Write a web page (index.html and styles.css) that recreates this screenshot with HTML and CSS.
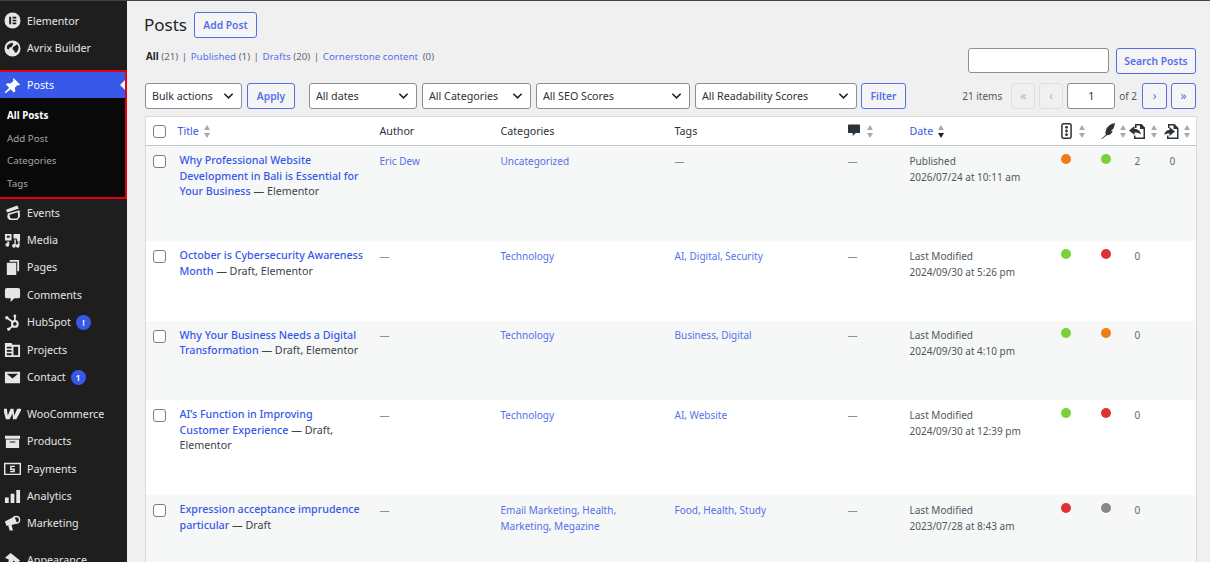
FILE: index.html
```html
<!DOCTYPE html>
<html lang="en">
<head>
<meta charset="utf-8">
<title>Posts</title>
<link rel="stylesheet" href="styles.css">
</head>
<body>
<div class="app">
<nav class="side">
  <ul class="menu first">
    <li><svg class="ic" viewBox="1 1 18 18"><path d="M10 1.500a8.500 8.500 0 1 0 0 17 8.500 8.500 0 0 0 0-17zM6.500 6h2v8h-2zm3.500 0h4v1.800h-4zm0 3.100h4v1.800h-4zm0 3.100h4V14h-4z" fill-rule="evenodd"/></svg>Elementor</li>
    <li><svg class="ic" viewBox="1 1 18 18"><path d="M10 1.500a8.500 8.500 0 1 0 0 17 8.500 8.500 0 0 0 0-17zM4.500 6.500 7 5l2-1 2 1-1 1.500-1 2-2 .5-1 2-2-1zm7.500 1 3-2 1.500 3-.5 3-2 3-2-.5v-2l-2-1 .5-2.500z" fill-rule="evenodd"/></svg>Avrix Builder</li>
  </ul>
  <div class="box">
    <div class="active"><svg class="ic" viewBox="1 1 18 18"><path d="m11 2 7 7-1.500 1-1-.5-3 3 .5 3.500-1.500 1.500-3.500-3.500L3 18l-1 0 0-1 4.500-4.500L3 9l1.500-1.500 3.500.5 3-3-.5-1z"/></svg>Posts<i class="notch"></i></div>
    <ul class="sub">
      <li class="cur">All Posts</li>
      <li>Add Post</li>
      <li>Categories</li>
      <li>Tags</li>
    </ul>
  </div>
  <ul class="menu">
    <li><svg class="ic" viewBox="1 1 18 18"><path d="M3 7 15 2.500l1.800 3.300L4.500 10zM5 11l12.500-3.500.5 7-3 3.500H7l-2.500-2.500zM6.800 12.300l.6 3 1 1h6l1.500-1.500-.3-5z" fill-rule="evenodd"/></svg>Events</li>
    <li><svg class="ic" viewBox="1 1 18 18"><path d="M2 3h7v7H2zM4 5v2h3V5zM11 3h7v8h-3V9l-1-1h-3zM12 9h1.500v6.500a2 2 0 1 1-1.500-1.800zM16 11.500h1.500v4a2 2 0 1 1-1.500-1.800zM4 11l2.500 0v3.500a2 2 0 1 1-1.500-1.800V12H4z" fill-rule="evenodd"/></svg>Media</li>
    <li><svg class="ic" viewBox="1 1 18 18"><path d="M7 2h10v12h-2V4H7zM4 5h10v13H4z"/></svg>Pages</li>
    <li><svg class="ic" viewBox="1 1 18 18"><path d="M4 3h12a2 2 0 0 1 2 2v7a2 2 0 0 1-2 2h-4l-4 4v-4H4a2 2 0 0 1-2-2V5a2 2 0 0 1 2-2z"/></svg>Comments</li>
    <li><svg class="ic" viewBox="1 1 18 18"><circle cx="12.500" cy="11.500" r="3" fill="none" stroke="currentColor" stroke-width="2.200"/><path d="M12.500 3v6M4 5l7 5M10 14l-4 3" fill="none" stroke="currentColor" stroke-width="1.800"/><circle cx="4" cy="5" r="1.800"/><circle cx="6" cy="17" r="1.800"/><circle cx="12.500" cy="3" r="1.500"/></svg>HubSpot<b class="badge">!</b></li>
    <li><svg class="ic" viewBox="1 1 18 18"><path d="M2 3h7l1 2h8v13H2zM4 7v2h5V7zm0 3.500v2h5v-2zm0 3.500v2h5v-2zM11 7v9h5V7z" fill-rule="evenodd"/></svg>Projects</li>
    <li><svg class="ic" viewBox="1 1 18 18"><path d="M2 4h16v12H2zM4 6l6 5 6-5z" fill-rule="evenodd"/></svg>Contact<b class="badge">1</b></li>
  </ul>
  <ul class="menu group">
    <li><svg class="ic" viewBox="1 1 18 18"><path d="M0 5h4l1 7 3-7h3l1 7 3-7h5l-6 11h-3.500L10 10l-3 6H3z"/></svg>WooCommerce</li>
    <li><svg class="ic" viewBox="1 1 18 18"><path d="M2 4h16v3H2zM3 8h14v9H3zM7 10v1h6v-1z" fill-rule="evenodd"/></svg>Products</li>
    <li><svg class="ic" viewBox="1 1 18 18"><path d="M1 4h18v13H1zM2.500 5.500v10h15v-10z" fill-rule="evenodd"/><path d="M7.500 7h5v1.500H9v1.500h3.500v4h-5v-1.500H11V11.500H7.500z"/></svg>Payments</li>
    <li><svg class="ic" viewBox="1 1 18 18"><path d="M2 11h4v6H2zM8 7h4v10H8zM14 3h4v14h-4z"/></svg>Analytics</li>
    <li><svg class="ic" viewBox="1 1 18 18"><path d="M2 8l10-5.500 3 7.500-6 1.500 1.500 6H7l-1.500-5.500-2 .5z"/><circle cx="14" cy="6" r="3.500" fill="none" stroke="currentColor" stroke-width="1.500"/></svg>Marketing</li>
  </ul>
  <ul class="menu group">
    <li><svg class="ic" viewBox="1 1 18 18"><path d="m8 2 10 8-3 3-4-3-2 8H5l1-9-4-2z"/></svg>Appearance</li>
  </ul>
</nav>
<main class="main">
  <header class="head">
    <h1>Posts</h1>
    <a class="btn add">Add Post</a>
  </header>
  <div class="search-row">
    <ul class="views">
      <li><strong>All</strong> <span>(21)</span></li>
      <li><a>Published</a> <span>(1)</span></li>
      <li><a>Drafts</a> <span>(20)</span></li>
      <li><a>Cornerstone content</a> <span class="gap">(0)</span></li>
    </ul>
    <div class="search"><input class="field" type="text" aria-label="Search"><a class="btn go">Search Posts</a></div>
  </div>
  <div class="tablenav">
    <div class="sel w97">Bulk actions<svg viewBox="0 0 12 8"><path d="m1.500 1.500 4.500 4.500 4.500-4.500"/></svg></div>
    <a class="btn apply">Apply</a>
    <div class="sel w108">All dates<svg viewBox="0 0 12 8"><path d="m1.500 1.500 4.500 4.500 4.500-4.500"/></svg></div>
    <div class="sel w109">All Categories<svg viewBox="0 0 12 8"><path d="m1.500 1.500 4.500 4.500 4.500-4.500"/></svg></div>
    <div class="sel w154">All SEO Scores<svg viewBox="0 0 12 8"><path d="m1.500 1.500 4.500 4.500 4.500-4.500"/></svg></div>
    <div class="sel w162">All Readability Scores<svg viewBox="0 0 12 8"><path d="m1.500 1.500 4.500 4.500 4.500-4.500"/></svg></div>
    <a class="btn filter">Filter</a>
    <div class="pages">
      <span class="items">21 items</span>
      <span class="pg off">«</span>
      <span class="pg off">‹</span>
      <span class="cur-page">1</span>
      <span class="of">of 2</span>
      <span class="pg">›</span>
      <span class="pg">»</span>
    </div>
  </div>
  <table class="posts">
    <colgroup>
      <col class="c-cb"><col class="c-title"><col class="c-author"><col class="c-cat"><col class="c-tags"><col class="c-com"><col class="c-date"><col class="c-seo"><col class="c-read"><col class="c-links"><col class="c-linked">
    </colgroup>
    <thead>
      <tr>
        <th class="cb"><i class="check"></i></th>
        <th class="t-th"><a>Title</a><i class="sort"></i></th>
        <th>Author</th>
        <th>Categories</th>
        <th>Tags</th>
        <th class="ic-th"><svg class="h-com" viewBox="1 1.500 14 14"><path d="M2 1.500h12a1 1 0 0 1 1 1v8a1 1 0 0 1-1 1H10l-3.500 3.500v-3.500H2a1 1 0 0 1-1-1v-8a1 1 0 0 1 1-1z"/></svg><i class="sort wide"></i></th>
        <th><a>Date</a><i class="sort down"></i></th>
        <th class="ic-th"><svg class="h-seo" viewBox="3 .5 10 15"><rect x="3.700" y="1.200" width="8.600" height="13.600" rx="1.500" fill="none" stroke="currentColor" stroke-width="1.400"/><circle cx="8" cy="4.500" r="1.300"/><circle cx="8" cy="8" r="1.300"/><circle cx="8" cy="11.500" r="1.300"/></svg><i class="sort wide"></i></th>
        <th class="ic-th"><svg class="h-read" viewBox="2 1 13 15"><path d="M15 1c-4.500 1-7.500 3.500-8.500 7-.5 1.500-.5 3 0 4L2 16h.8l4.700-3.500c2.500 0 4.500-1.500 5.500-4l-2 .2 2.500-2.200c.8-1.800 1.300-3.500 1.500-5.500z"/></svg><i class="sort"></i></th>
        <th class="ic-th tight"><svg class="h-links" viewBox="0 0 17 16"><path d="M6 1h6.500L16 4.500V16H5v-3.500h1.500V14.500h8V6H11V2.500H7.500V5H6z"/><path d="M0 7.500 5.500 3v3c3.500 0 6 2 6.500 5.500C10 10 8 9.500 5.500 9.500V12z"/></svg><i class="sort"></i></th>
        <th class="ic-th tight"><svg class="h-linked" viewBox="0 0 15 16"><path d="M4 1h6.500L14.500 5v11H3v-3.500h1.500v2h8.500V6H9.500V2.500H5.500V5H4z"/><path d="M11 8.500 5.500 4v3C3 7 .8 8.500.2 12 2 10.500 3.500 10.500 5.500 10.500V13z"/></svg><i class="sort"></i></th>
      </tr>
    </thead>
    <tbody>
      <tr class="alt">
        <td class="cb"><i class="check"></i></td>
        <td class="title"><a>Why Professional Website Development in Bali is Essential for Your Business</a> <span>— Elementor</span></td>
        <td><a class="lnk">Eric Dew</a></td>
        <td><a class="lnk">Uncategorized</a></td>
        <td class="dash">—</td>
        <td class="dash">—</td>
        <td class="date">Published<br>2026/07/24 at 10:11 am</td>
        <td><i class="dot orange"></i></td>
        <td><i class="dot green"></i></td>
        <td>2</td>
        <td>0</td>
      </tr>
      <tr>
        <td class="cb"><i class="check"></i></td>
        <td class="title"><a>October is Cybersecurity Awareness Month</a> <span>— Draft, Elementor</span></td>
        <td class="dash">—</td>
        <td><a class="lnk">Technology</a></td>
        <td><a class="lnk">AI, Digital, Security</a></td>
        <td class="dash">—</td>
        <td class="date">Last Modified<br>2024/09/30 at 5:26 pm</td>
        <td><i class="dot green"></i></td>
        <td><i class="dot red"></i></td>
        <td>0</td>
        <td></td>
      </tr>
      <tr class="alt">
        <td class="cb"><i class="check"></i></td>
        <td class="title"><a>Why Your Business Needs a Digital Transformation</a> <span>— Draft, Elementor</span></td>
        <td class="dash">—</td>
        <td><a class="lnk">Technology</a></td>
        <td><a class="lnk">Business, Digital</a></td>
        <td class="dash">—</td>
        <td class="date">Last Modified<br>2024/09/30 at 4:10 pm</td>
        <td><i class="dot green"></i></td>
        <td><i class="dot orange"></i></td>
        <td>0</td>
        <td></td>
      </tr>
      <tr>
        <td class="cb"><i class="check"></i></td>
        <td class="title"><a>AI’s Function in Improving Customer Experience</a> <span>— Draft, Elementor</span></td>
        <td class="dash">—</td>
        <td><a class="lnk">Technology</a></td>
        <td><a class="lnk">AI, Website</a></td>
        <td class="dash">—</td>
        <td class="date">Last Modified<br>2024/09/30 at 12:39 pm</td>
        <td><i class="dot green"></i></td>
        <td><i class="dot red"></i></td>
        <td>0</td>
        <td></td>
      </tr>
      <tr class="alt">
        <td class="cb"><i class="check"></i></td>
        <td class="title"><a>Expression acceptance imprudence particular</a> <span>— Draft</span></td>
        <td class="dash">—</td>
        <td><a class="lnk">Email Marketing, Health, Marketing, Megazine</a></td>
        <td><a class="lnk">Food, Health, Study</a></td>
        <td class="dash">—</td>
        <td class="date">Last Modified<br>2023/07/28 at 8:43 am</td>
        <td><i class="dot red"></i></td>
        <td><i class="dot gray"></i></td>
        <td>0</td>
        <td></td>
      </tr>
    </tbody>
  </table>
</main>
</div>
</body>
</html>
```
FILE: styles.css
```css
* { box-sizing: border-box; }
html, body { margin: 0; height: 562px; overflow: hidden; }
body { background: #f0f0f1; color: #3c434a; font: 10px/16px "Noto Sans", "Open Sans", sans-serif; }
ul { list-style: none; margin: 0; padding: 0; }
.app { display: flex; height: 562px; overflow: hidden; border-top: 1px solid #444; }

.side { width: 127px; flex: none; background: #1e1e1e; color: #e4e6e7; font-size: 10.700px; }
.menu li { display: flex; align-items: center; height: 27.400px; gap: 6px; padding-left: 4px; white-space: nowrap; }
.menu.first { padding-top: 6px; height: 69px; }
.menu.group { margin-top: 9.500px; }
.ic { width: 17px; height: 17px; fill: currentColor; flex: none; }
.box { border: 2.500px solid #e3000f; border-left: 0; background: #090909; height: 129px; }
.active { position: relative; display: flex; align-items: center; gap: 6px; height: 26px; padding-left: 4px; background: #3858e9; color: #fff; }
.notch { position: absolute; right: 0; top: 8px; border: 5px solid transparent; border-right-color: #f0f0f1; border-left: 0; }
.sub { padding-top: 7px; font-size: 9.800px; color: #a4a7aa; }
.sub li { height: 22.700px; line-height: 22.700px; padding-left: 7px; }
.sub .cur { color: #fff; font-weight: 700; }
.badge { display: inline-block; width: 15px; height: 15px; margin-left: -1px; border-radius: 50%; background: #3858e9; color: #fff; font: 600 9px/15px "Noto Sans", sans-serif; text-align: center; }

.main { flex: 1; min-width: 0; padding: 0 14px 0 18px; }
.head { display: flex; align-items: center; gap: 7px; height: 37px; padding-top: 11px; }
h1 { margin: 0 0 0 -1px; font-size: 17px; line-height: 26px; font-weight: 400; color: #1d2327; }
.btn { display: inline-flex; align-items: center; justify-content: center; height: 26px; border: 1px solid #3858e9; border-radius: 3px; background: #f6f7f7; color: #3858e9; font-size: 10.300px; font-weight: 600; opacity: .85; white-space: nowrap; }
.add { width: 63px; }
.go { width: 80px; }
.search-row { display: flex; justify-content: space-between; align-items: flex-start; margin-top: 10px; height: 35px; padding-left: 1px; }
.views { display: flex; font-size: 9.800px; color: #646970; padding-top: 1px; }
.views li + li::before { content: "|"; margin: 0 3.500px; }
.views strong { color: #1d2327; font-weight: 700; }
.views a, .lnk, th a { color: #3858e9; }
.views a { opacity: .85; }
.gap { margin-left: 2px; }
.search { display: flex; gap: 7px; }
.field { width: 141px; height: 25px; border: 1px solid #8c8f94; border-radius: 3px; background: #fff; }
.tablenav { display: flex; align-items: center; height: 26px; }
.sel { display: flex; align-items: center; justify-content: space-between; height: 26px; margin-right: 5px; padding: 0 7px 0 6px; border: 1px solid #8c8f94; border-radius: 3px; background: #fff; color: #2c3338; font-size: 10.700px; white-space: nowrap; }
.sel svg { width: 11px; height: 8px; fill: none; stroke: #1d2327; stroke-width: 1.700; }
.w97 { width: 97px; }
.w108 { width: 108px; }
.w109 { width: 109px; }
.w154 { width: 154px; }
.w162 { width: 162px; margin-right: 4px; }
.apply { width: 48px; margin-right: 14px; }
.filter { width: 45px; }
.pages { display: flex; align-items: center; margin-left: auto; color: #50575e; font-size: 10px; }
.items { margin-right: 9px; }
.pg { display: flex; align-items: center; justify-content: center; width: 25px; height: 26px; margin-left: 4px; border: 1px solid #3858e9; border-radius: 3px; background: #f6f7f7; color: #3858e9; opacity: .85; font-size: 12px; }
.pg.off { width: 24px; margin-left: 0; margin-right: 4px; border-color: #dcdcde; color: #a7aaad; background: #f0f0f1; }
.cur-page { width: 48px; height: 26px; border: 1px solid #8c8f94; border-radius: 3px; background: #fff; text-align: center; line-height: 24px; color: #2c3338; font-size: 10.700px; }
.of { margin: 0 1px 0 4px; }

.posts { width: 1051px; margin-top: 7px; table-layout: fixed; border-collapse: collapse; background: #fff; border: 1px solid #dcdcde; }
.c-cb { width: 26px; } .c-title { width: 200px; } .c-author { width: 121px; } .c-cat { width: 174px; } .c-tags { width: 173px; } .c-com { width: 62px; } .c-date { width: 151px; } .c-seo { width: 40px; } .c-read { width: 34px; } .c-links { width: 35px; } .c-linked { width: 35px; }
th { height: 29px; padding: 0 8px; border-bottom: 1px solid #c3c4c7; font-weight: 400; font-size: 10.700px; text-align: left; color: #2c3338; white-space: nowrap; }
th.t-th { padding-left: 6px; }
th.tight { padding-left: 2px; }
td { padding: 6.500px 8px 41px; vertical-align: top; font-size: 10px; line-height: 16px; color: #646970; }
.alt td { background: #f6f7f7; }
.cb { padding-left: 7px; padding-right: 0; }
td.cb { padding-top: 9px; }
.check { display: block; width: 13px; height: 13px; border: 1px solid #7a7d82; border-radius: 3px; background: #fff; }
td.title { padding: 7px 8px 41.500px; font-size: 10.700px; line-height: 15.500px; color: #3c434a; }
.title a { color: #3858e9; font-weight: 500; }
.lnk { opacity: .85; }
.dash { color: #8c8f94; }
.date { color: #50575e; }
.dot { display: block; width: 10px; height: 10px; border-radius: 50%; margin-top: 1px; }
.orange { background: #ee7c1b; }
.green { background: #7ad03a; }
.red { background: #dc3232; }
.gray { background: #888; }
th svg { fill: currentColor; color: #2c3338; vertical-align: -4px; }
.h-com { width: 12px; height: 13px; vertical-align: -2px; }
.h-seo { width: 11px; height: 16px; }
.h-read { width: 14px; height: 16px; }
.h-links { width: 17px; height: 16px; }
.h-linked { width: 15px; height: 16px; }
.sort { display: inline-block; position: relative; width: 7px; height: 13px; margin-left: 5px; vertical-align: -3px; }
.sort.wide { margin-left: 7px; }
.sort::before, .sort::after { content: ""; position: absolute; left: 0; border: 3.500px solid transparent; }
.sort::before { top: 0; border-top-width: 0; border-bottom: 5px solid #a7aaad; }
.sort::after { bottom: 0; border-bottom-width: 0; border-top: 5px solid #a7aaad; }
.sort.down::after { border-top-color: #1d2327; }
```
